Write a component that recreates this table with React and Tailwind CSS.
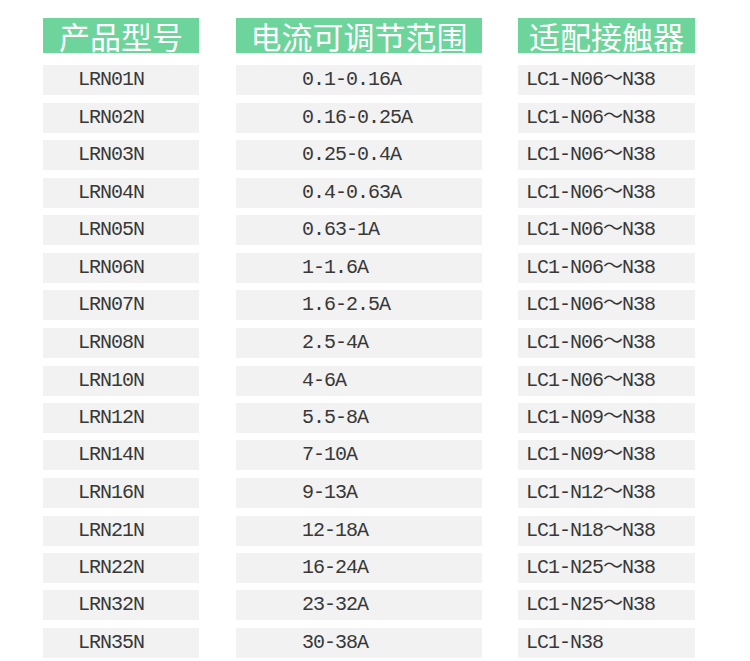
import React from 'react';

const rows = [
  ['LRN01N', '0.1-0.16A', 'LC1-N06～N38', 'mt-[12px]'],
  ['LRN02N', '0.16-0.25A', 'LC1-N06～N38', 'mt-[8px]'],
  ['LRN03N', '0.25-0.4A', 'LC1-N06～N38', 'mt-[7px]'],
  ['LRN04N', '0.4-0.63A', 'LC1-N06～N38', 'mt-[8px]'],
  ['LRN05N', '0.63-1A', 'LC1-N06～N38', 'mt-[7px]'],
  ['LRN06N', '1-1.6A', 'LC1-N06～N38', 'mt-[8px]'],
  ['LRN07N', '1.6-2.5A', 'LC1-N06～N38', 'mt-[7px]'],
  ['LRN08N', '2.5-4A', 'LC1-N06～N38', 'mt-[8px]'],
  ['LRN10N', '4-6A', 'LC1-N06～N38', 'mt-[8px]'],
  ['LRN12N', '5.5-8A', 'LC1-N09～N38', 'mt-[7px]'],
  ['LRN14N', '7-10A', 'LC1-N09～N38', 'mt-[7px]'],
  ['LRN16N', '9-13A', 'LC1-N12～N38', 'mt-[8px]'],
  ['LRN21N', '12-18A', 'LC1-N18～N38', 'mt-[8px]'],
  ['LRN22N', '16-24A', 'LC1-N25～N38', 'mt-[7px]'],
  ['LRN32N', '23-32A', 'LC1-N25～N38', 'mt-[7px]'],
  ['LRN35N', '30-38A', 'LC1-N38', 'mt-[8px]'],
];

const mono = "font-['Liberation_Mono','Noto_Sans_CJK_SC',monospace]";
const cjk = "font-['Noto_Sans_CJK_SC','Noto_Sans',sans-serif]";

export default function App() {
  return (
    <div className="w-[750px] h-[661px] bg-white pl-[43px] pt-[18px] overflow-hidden">
      {/* header */}
      <div className={`flex h-[35px] text-white text-[31px] leading-none ${cjk}`}>
        <div className="w-[156px] bg-[#6dd49c] flex items-center justify-center">产品型号</div>
        <div className="w-[246px] ml-[37px] bg-[#6dd49c] flex items-center justify-center">电流可调节范围</div>
        <div className="w-[177px] ml-[36px] bg-[#6dd49c] flex items-center justify-center">适配接触器</div>
      </div>

      {rows.map(([model, range, contactor, mt]) => (
        <div key={model} className={`flex h-[30px] text-[20px] tracking-[-1px] text-[#383838] ${mono} ${mt}`}>
          <div className="w-[156px] bg-[#f2f2f2] flex items-center pl-[35px]">{model}</div>
          <div className="w-[246px] ml-[37px] bg-[#f2f2f2] flex items-center pl-[66px]">{range}</div>
          <div className="w-[177px] ml-[36px] bg-[#f2f2f2] flex items-center pl-[8px] whitespace-nowrap">{contactor}</div>
        </div>
      ))}
    </div>
  );
}
